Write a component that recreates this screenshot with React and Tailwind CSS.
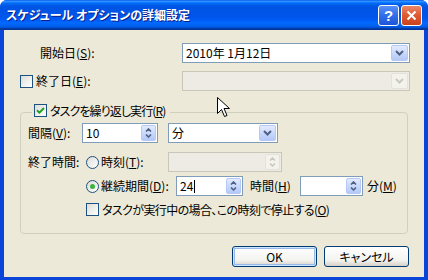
import React from 'react';

// XP 風のダイアログ「スケジュール オプションの詳細設定」

function DropArrow({ disabled }) {
  return (
    <div
      className={`flex h-full w-[17px] items-center justify-center rounded-[2px] border ${
        disabled
          ? 'border-[#E3E1D8] bg-[#F3F2EC]'
          : 'border-[#B5C8F6] bg-[linear-gradient(180deg,#E3EBFE,#C5D6FB_60%,#B4C8F6)]'
      }`}
    >
      <svg width="9" height="6" viewBox="0 0 9 6">
        <path d="M1 1l3.5 3.5L8 1" stroke={disabled ? '#CAC8BE' : '#4D6185'} strokeWidth="2" fill="none" />
      </svg>
    </div>
  );
}

function SpinArrows({ disabled }) {
  const c = disabled ? '#CAC8BE' : '#4D6185';
  return (
    <div
      className={`flex w-[15px] flex-col items-center justify-center gap-[2px] rounded-[2px] border ${
        disabled
          ? 'border-[#E3E1D8] bg-[#F3F2EC]'
          : 'border-[#B5C8F6] bg-[linear-gradient(180deg,#E3EBFE,#C5D6FB_60%,#B4C8F6)]'
      }`}
    >
      <svg width="7" height="4" viewBox="0 0 7 4">
        <path d="M1 3.5L3.5 1L6 3.5" stroke={c} strokeWidth="1.6" fill="none" />
      </svg>
      <svg width="7" height="4" viewBox="0 0 7 4">
        <path d="M1 0.5L3.5 3L6 0.5" stroke={c} strokeWidth="1.6" fill="none" />
      </svg>
    </div>
  );
}

function Combo({ className, value, disabled }) {
  return (
    <div
      className={`flex h-[20px] items-stretch border p-[1px] ${
        disabled ? 'border-[#C9C7BA] bg-[#EDEBE3]' : 'border-[#7F9DB9] bg-white'
      } ${className}`}
    >
      <span className="flex-1 pl-[2px] leading-[16px]">{value}</span>
      <DropArrow disabled={disabled} />
    </div>
  );
}

function Spin({ className, value, disabled, caret }) {
  return (
    <div
      className={`flex h-[20px] items-stretch border p-[1px] ${
        disabled ? 'border-[#C9C7BA] bg-[#EDEBE3]' : 'border-[#7F9DB9] bg-white'
      } ${className}`}
    >
      <span className="flex flex-1 items-center pl-[2px] leading-[16px]">
        {value}
        {caret && <span className="ml-px inline-block h-[13px] w-px bg-black" />}
      </span>
      <SpinArrows disabled={disabled} />
    </div>
  );
}

function Check({ checked }) {
  return (
    <span className="flex h-[13px] w-[13px] shrink-0 items-center justify-center border border-[#1C5180] bg-[linear-gradient(135deg,#DCDCD7,#FFFFFF)]">
      {checked && (
        <svg width="9" height="9" viewBox="0 0 9 9">
          <path d="M1 4.2l2.4 2.4L8 2" stroke="#21A121" strokeWidth="2" fill="none" />
        </svg>
      )}
    </span>
  );
}

function Radio({ checked }) {
  return (
    <span className="flex h-[13px] w-[13px] shrink-0 items-center justify-center rounded-full border border-[#1C5180] bg-[linear-gradient(135deg,#DCDCD7,#FFFFFF)]">
      {checked && <span className="h-[5px] w-[5px] rounded-full bg-[#3DB43D]" />}
    </span>
  );
}

function XpButton({ children, isDefault }) {
  return (
    <div
      className={`flex h-[21px] w-[85px] items-center justify-center rounded-[3px] border border-[#003C74] bg-[linear-gradient(180deg,#FFFFFF,#F3F3EF_70%,#D6D0C5)] ${
        isDefault ? 'shadow-[inset_0_0_0_1px_#CEE7FF,inset_0_0_0_2px_#98B8EA]' : ''
      }`}
    >
      {children}
    </div>
  );
}

export default function App() {
  return (
    <div className="h-[280px] w-[428px] bg-white font-['MS_UI_Gothic','Noto_Sans_CJK_JP',sans-serif] text-[12px] text-black [font-feature-settings:'palt']">
      <div className="flex h-full flex-col rounded-t-[7px] bg-[#0845D8]">
        {/* タイトルバー */}
        <div className="flex h-[30px] shrink-0 items-center rounded-t-[7px] bg-[linear-gradient(180deg,#0058EE_0%,#3593FF_4%,#288EFF_6%,#127DFF_8%,#036FFC_10%,#0262EE_14%,#0057E5_20%,#0054E3_24%,#0055EB_56%,#005BF5_66%,#026AFE_76%,#0062EF_86%,#0052D6_92%,#0040AB_94%,#003092_100%)] pl-[6px] pr-[6px]">
          <span className="text-[12px] font-bold leading-[14px] text-white [text-shadow:1px_1px_#0A1F8F]">
            スケジュール オプションの詳細設定
          </span>
          <div className="ml-auto flex gap-[2px]">
            <div className="flex h-[21px] w-[21px] items-center justify-center rounded-[3px] border border-white bg-[linear-gradient(180deg,#5A8FF5,#2F6FEA_50%,#1D55D6)] font-['Liberation_Sans',sans-serif] text-[15px] font-bold leading-none text-white">
              ?
            </div>
            <div className="flex h-[21px] w-[21px] items-center justify-center rounded-[3px] border border-white bg-[linear-gradient(180deg,#E9876A,#E0582F_50%,#C8431E)]">
              <svg width="11" height="11" viewBox="0 0 11 11">
                <path d="M1.5 1.5l8 8M9.5 1.5l-8 8" stroke="white" strokeWidth="2" />
              </svg>
            </div>
          </div>
        </div>

        {/* クライアント領域 */}
        <div className="relative mx-[4px] mb-[3px] flex-1 bg-[#ECE9D8] leading-[14px]">
          <div className="mt-[13px] flex h-[20px] items-center">
            <span className="ml-[36px] w-[142px]">
              開始日(<u>S</u>):
            </span>
            <Combo className="w-[228px]" value="2010年 1月12日" />
          </div>

          <div className="mt-[8px] flex h-[20px] items-center">
            <span className="ml-[16px] flex w-[162px] items-center gap-[3px]">
              <Check />
              <span>
                終了日(<u>E</u>):
              </span>
            </span>
            <Combo className="w-[228px]" disabled />
          </div>

          <fieldset className="ml-[16px] mt-[12px] h-[131px] w-[388px] rounded-[4px] border border-[#D0D0BF]">
            <legend className="ml-[11px] flex h-[18px] items-start gap-[3px] pl-[2px] pr-[5px]">
              <span className="mt-[1px]">
                <Check checked />
              </span>
              <span className="leading-[15px] tracking-[-0.9px]">
                タスクを繰り返し実行(<u>R</u>)
              </span>
            </legend>

            <div className="mt-[2px] flex h-[20px] items-center">
              <span className="ml-[7px] w-[54px]">
                間隔(<u>V</u>):
              </span>
              <Spin className="w-[76px]" value="10" />
              <Combo className="ml-[10px] w-[110px]" value="分" />
            </div>

            <div className="mt-[9px] flex h-[20px] items-center">
              <span className="ml-[7px] w-[58px]">終了時間:</span>
              <Radio />
              <span className="ml-[2px] w-[67px]">
                時刻(<u>T</u>):
              </span>
              <Spin className="w-[114px]" disabled />
            </div>

            <div className="mt-[4px] flex h-[20px] items-center">
              <span className="ml-[65px]">
                <Radio checked />
              </span>
              <span className="ml-[2px] w-[75px]">
                継続期間(<u>D</u>):
              </span>
              <Spin className="w-[67px]" value="24" caret />
              <span className="ml-[7px] w-[50px]">
                時間(<u>H</u>)
              </span>
              <Spin className="w-[63px]" />
              <span className="ml-[4px]">
                分(<u>M</u>)
              </span>
            </div>

            <div className="mt-[7px] flex h-[13px] items-center">
              <span className="ml-[65px]">
                <Check />
              </span>
              <span className="ml-[3px] tracking-[-0.6px]">
                タスクが実行中の場合、この時刻で停止する(<u>O</u>)
              </span>
            </div>
          </fieldset>

          <div className="ml-[228px] mt-[12px] flex gap-[7px]">
            <XpButton isDefault>OK</XpButton>
            <XpButton>キャンセル</XpButton>
          </div>

          {/* マウスカーソル */}
          <svg className="absolute left-[213px] top-[67px]" width="13" height="21" viewBox="0 0 13 21">
            <path d="M0.5 0.5v16l4-4 3 7 2.5-1-3-7h5.5z" fill="white" stroke="black" strokeWidth="1" />
          </svg>
        </div>
      </div>
    </div>
  );
}
